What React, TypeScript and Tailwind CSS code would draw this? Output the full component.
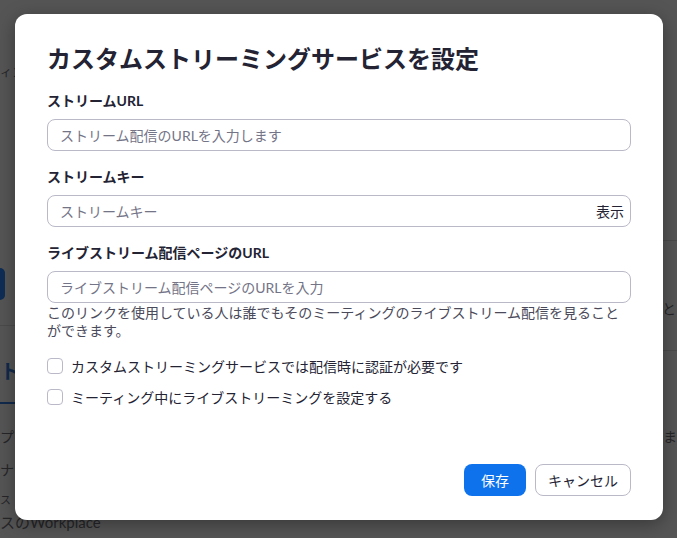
const fields = [
  { label: "ストリームURL", placeholder: "ストリーム配信のURLを入力します", action: "" },
  { label: "ストリームキー", placeholder: "ストリームキー", action: "表示" },
  { label: "ライブストリーム配信ページのURL", placeholder: "ライブストリーム配信ページのURLを入力", action: "" },
]

const options = [
  "カスタムストリーミングサービスでは配信時に認証が必要です",
  "ミーティング中にライブストリーミングを設定する",
]

function Backdrop() {
  return (
    <div className="flex h-[538px] flex-col overflow-hidden bg-[#555555] text-[#262629]">
      <div className="h-[64px]" />
      <div className="h-[18px] text-[12px] leading-[18px]">ィン</div>
      <div className="h-[158px]" />
      <div className="ml-auto h-px w-[20px] bg-[#4a4a4a]" />
      <div className="h-[27px]" />
      <div className="h-[32px] w-[5px] rounded-r-md bg-[#0f2d55]" />
      <div className="flex h-[18px] justify-end text-[14px] leading-[18px]">
        <span className="pr-[1px]">こと</span>
      </div>
      <div className="h-[7px]" />
      <div className="h-px w-[44px] bg-[#4b4b4b]" />
      <div className="h-[24px]" />
      <div className="ml-auto h-px w-[20px] bg-[#4b4b4b]" />
      <div className="h-[9px]" />
      <div className="h-[22px] text-[20px] font-bold leading-[22px] text-[#112a4c]">ト</div>
      <div className="h-[20px]" />
      <div className="h-[2px] w-[44px] bg-[#112a4c]" />
      <div className="h-[24px]" />
      <div className="flex h-[18px] justify-between text-[14px] leading-[18px]">
        <span>プを</span>
        <span>ま</span>
      </div>
      <div className="h-[15px]" />
      <div className="h-[18px] text-[14px] leading-[18px]">ナー</div>
      <div className="h-[12px]" />
      <div className="h-[18px] text-[11px] leading-[18px]">ス</div>
      <div className="h-[4px]" />
      <div className="h-[18px] text-[15px] leading-[18px]">スのWorkplace</div>
    </div>
  )
}

export default function App() {
  return (
    <div className="relative h-[538px] w-[677px] overflow-hidden font-['Lato','Noto_Sans_CJK_JP',sans-serif]">
      <Backdrop />

      <div className="absolute left-[15px] top-[14px] flex h-[506px] w-[648px] flex-col rounded-[12px] bg-white px-8 pb-6 pt-[29px] shadow-[0_4px_18px_rgba(0,0,0,0.35)]">
        <h1 className="text-[24px] font-bold leading-[32px] text-[#232333]">
          カスタムストリーミングサービスを設定
        </h1>

        {fields.map((field) => (
          <div key={field.label} className="mt-4">
            <label className="block text-[14px] font-bold leading-[20px] text-[#232333]">{field.label}</label>
            <div className="mt-2 flex h-8 items-center rounded-lg border border-[#bab9c8] pl-3 pr-[6px]">
              <span className="flex-1 text-[14px] text-[#747487]">{field.placeholder}</span>
              {field.action && <span className="text-[14px] text-[#232333]">{field.action}</span>}
            </div>
          </div>
        ))}

        <p className="mt-[1px] text-[14px] leading-[18px] text-[#4a4a5a]">
          このリンクを使用している人は誰でもそのミーティングのライブストリーム配信を見ることができます。
        </p>

        <div className="mt-4 flex flex-col gap-[11px]">
          {options.map((option) => (
            <label key={option} className="flex h-5 items-center gap-2 text-[14px] text-[#232333]">
              <span className="h-4 w-4 rounded-[4px] border border-[#bab9c8] bg-white" />
              {option}
            </label>
          ))}
        </div>

        <div className="mt-auto flex justify-end gap-[9px]">
          <button className="h-8 w-[62px] rounded-lg bg-[#0e72ed] text-[14px] text-white">保存</button>
          <button className="h-8 w-[96px] rounded-lg border border-[#bab9c8] bg-white text-[14px] text-[#232333]">
            キャンセル
          </button>
        </div>
      </div>
    </div>
  )
}
